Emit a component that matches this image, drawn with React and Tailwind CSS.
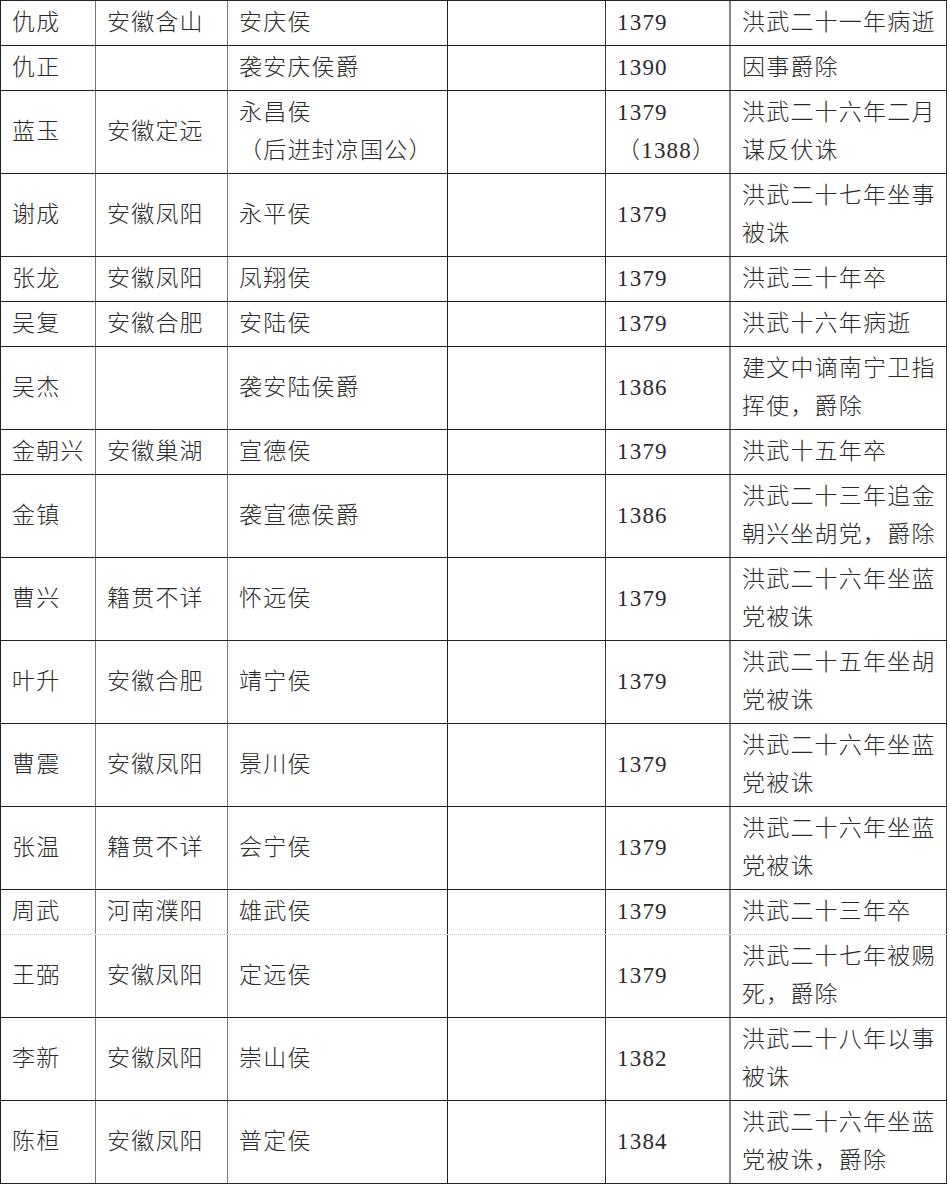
const rows = [
  { name: '仇成', place: '安徽含山', title: ['安庆侯'], year: ['1379'], fate: ['洪武二十一年病逝'] },
  { name: '仇正', place: '', title: ['袭安庆侯爵'], year: ['1390'], fate: ['因事爵除'] },
  { name: '蓝玉', place: '安徽定远', title: ['永昌侯', '（后进封凉国公）'], year: ['1379', '（1388）'], fate: ['洪武二十六年二月', '谋反伏诛'] },
  { name: '谢成', place: '安徽凤阳', title: ['永平侯'], year: ['1379'], fate: ['洪武二十七年坐事', '被诛'] },
  { name: '张龙', place: '安徽凤阳', title: ['凤翔侯'], year: ['1379'], fate: ['洪武三十年卒'] },
  { name: '吴复', place: '安徽合肥', title: ['安陆侯'], year: ['1379'], fate: ['洪武十六年病逝'] },
  { name: '吴杰', place: '', title: ['袭安陆侯爵'], year: ['1386'], fate: ['建文中谪南宁卫指', '挥使，爵除'] },
  { name: '金朝兴', place: '安徽巢湖', title: ['宣德侯'], year: ['1379'], fate: ['洪武十五年卒'] },
  { name: '金镇', place: '', title: ['袭宣德侯爵'], year: ['1386'], fate: ['洪武二十三年追金', '朝兴坐胡党，爵除'] },
  { name: '曹兴', place: '籍贯不详', title: ['怀远侯'], year: ['1379'], fate: ['洪武二十六年坐蓝', '党被诛'] },
  { name: '叶升', place: '安徽合肥', title: ['靖宁侯'], year: ['1379'], fate: ['洪武二十五年坐胡', '党被诛'] },
  { name: '曹震', place: '安徽凤阳', title: ['景川侯'], year: ['1379'], fate: ['洪武二十六年坐蓝', '党被诛'] },
  { name: '张温', place: '籍贯不详', title: ['会宁侯'], year: ['1379'], fate: ['洪武二十六年坐蓝', '党被诛'] },
  { name: '周武', place: '河南濮阳', title: ['雄武侯'], year: ['1379'], fate: ['洪武二十三年卒'], light: true },
  { name: '王弼', place: '安徽凤阳', title: ['定远侯'], year: ['1379'], fate: ['洪武二十七年被赐', '死，爵除'] },
  { name: '李新', place: '安徽凤阳', title: ['崇山侯'], year: ['1382'], fate: ['洪武二十八年以事', '被诛'] },
  { name: '陈桓', place: '安徽凤阳', title: ['普定侯'], year: ['1384'], fate: ['洪武二十六年坐蓝', '党被诛，爵除'] },
];

function Cell({ lines, className }) {
  return (
    <div className={`flex flex-col justify-center py-[3px] pl-[11px] whitespace-nowrap ${className}`}>
      {lines.map((l, i) => (
        <div key={i}>{l}</div>
      ))}
    </div>
  );
}

export default function App() {
  return (
    <div
      className="w-[949px] bg-white text-[#2a2a2a] text-[23px] leading-[38px] tracking-[1.2px] font-light"
      style={{ fontFamily: '"Liberation Serif", "Noto Sans CJK SC", serif' }}
    >
      <div className="w-[947px] border-l border-t border-[#222]">
        {rows.map((r, i) => (
          <div
            key={i}
            className={`grid grid-cols-[95px_132px_220px_158px_125px_216px] border-b ${
              r.light ? 'border-dotted border-[#c8c8c8]' : 'border-[#222]'
            }`}
          >
            <Cell lines={[r.name]} className="border-r border-[#777]" />
            <Cell lines={[r.place]} className="border-r border-[#777]" />
            <Cell lines={r.title} className="border-r border-[#222]" />
            <Cell lines={['']} className="border-r border-[#333]" />
            <Cell lines={r.year} className="border-r-2 border-[#888]" />
            <Cell lines={r.fate} className="border-r border-[#333]" />
          </div>
        ))}
      </div>
    </div>
  );
}
